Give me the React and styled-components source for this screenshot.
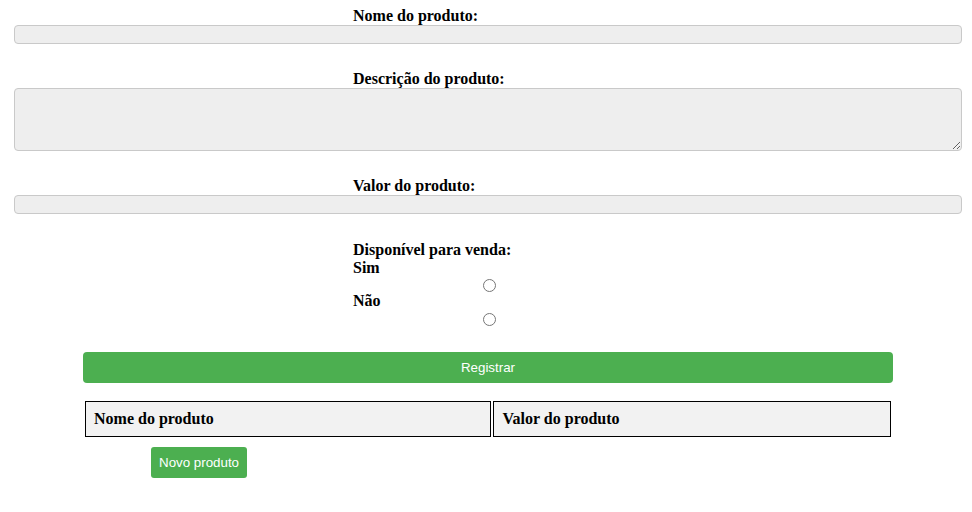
import React, { useState } from "react";
import styled, { createGlobalStyle } from "styled-components";

const GlobalStyle = createGlobalStyle`
  body {
    margin: 8px;
    font-family: "Liberation Serif", "Times New Roman", serif;
    background: #ffffff;
    color: #000000;
  }
`;

const Form = styled.form`
  display: block;
`;

const Label = styled.label`
  display: block;
  margin-left: 345px;
  margin-top: ${(p) => p.$top || 0}px;
  font-size: 16px;
  font-weight: bold;
  line-height: 18px;
`;

const Field = styled.input`
  display: block;
  box-sizing: border-box;
  width: calc(100% - 8px);
  height: 19px;
  margin: 0 0 0 6px;
  background: #eeeeee;
  border: 1px solid #c9c9c9;
  border-radius: 4px;
`;

const Area = styled.textarea`
  display: block;
  box-sizing: border-box;
  width: calc(100% - 8px);
  height: 63px;
  margin: 0 0 0 6px;
  background: #eeeeee;
  border: 1px solid #c9c9c9;
  border-radius: 4px;
`;

const Radio = styled.input`
  display: block;
  width: 13px;
  height: 13px;
  margin: ${(p) => p.$top || 0}px 0 0 475px;
`;

const SubmitButton = styled.button`
  display: block;
  box-sizing: border-box;
  width: 810px;
  height: 31px;
  margin: 26px 0 0 75px;
  border: none;
  border-radius: 4px;
  background: #4caf50;
  color: #ffffff;
  font-family: "Liberation Sans", Arial, sans-serif;
  font-size: 13.33px;
`;

const Table = styled.table`
  margin: 16px 0 0 75px;
  width: 810px;
  border-spacing: 2px;
`;

const Th = styled.th`
  text-align: left;
  padding: 8px;
  border: 1px solid #000000;
  background: #f2f2f2;
  font-size: 16px;
  line-height: 18px;
  width: ${(p) => p.$w}px;
`;

const NewButton = styled.button`
  display: block;
  height: 31px;
  margin: 8px 0 0 143px;
  padding: 0 8px;
  border: none;
  border-radius: 3px;
  background: #4caf50;
  color: #ffffff;
  font-family: "Liberation Sans", Arial, sans-serif;
  font-size: 13.33px;
`;

export default function App() {
  const [available, setAvailable] = useState("");

  return (
    <>
      <GlobalStyle />
      <Form onSubmit={(e) => e.preventDefault()}>
        <Label $top={-1}>Nome do produto:</Label>
        <Field type="text" />
        <Label $top={26}>Descrição do produto:</Label>
        <Area />
        <Label $top={26}>Valor do produto:</Label>
        <Field type="text" />
        <Label $top={27}>Disponível para venda:</Label>
        <Label>Sim</Label>
        <Radio
          type="radio"
          name="disponivel"
          $top={2}
          checked={available === "sim"}
          onChange={() => setAvailable("sim")}
        />
        <Label $top={0}>Não</Label>
        <Radio
          type="radio"
          name="disponivel"
          $top={3}
          checked={available === "nao"}
          onChange={() => setAvailable("nao")}
        />
        <SubmitButton type="submit">Registrar</SubmitButton>
      </Form>
      <Table>
        <thead>
          <tr>
            <Th $w={389}>Nome do produto</Th>
            <Th $w={380}>Valor do produto</Th>
          </tr>
        </thead>
      </Table>
      <NewButton type="button">Novo produto</NewButton>
    </>
  );
}
